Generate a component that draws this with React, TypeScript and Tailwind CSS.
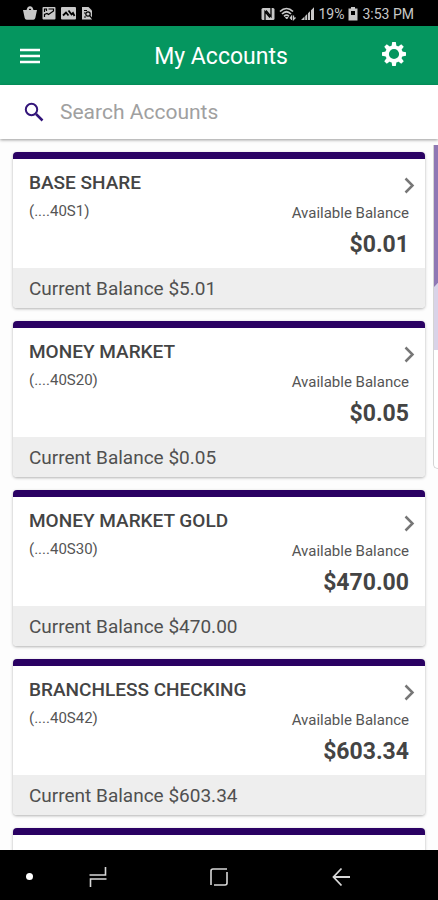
import type { ReactNode } from "react";

type Account = { name: string; number: string; available: string; current: string };

const accounts: Account[] = [
  { name: "BASE SHARE", number: "(....40S1)", available: "$0.01", current: "$5.01" },
  { name: "MONEY MARKET", number: "(....40S20)", available: "$0.05", current: "$0.05" },
  { name: "MONEY MARKET GOLD", number: "(....40S30)", available: "$470.00", current: "$470.00" },
  { name: "BRANCHLESS CHECKING", number: "(....40S42)", available: "$603.34", current: "$603.34" },
];

const gearTeeth = [0, 45, 90, 135, 180, 225, 270, 315];

function StatusBar() {
  return (
    <div className="flex h-[26px] shrink-0 items-center justify-between bg-black pr-6 pl-[23px] text-[#c8c8c8]">
      <div className="flex items-center gap-[5px]">
        <svg width="14" height="14" viewBox="0 0 14 14" fill="currentColor">
          <path d="M0 4h3.500L4.500 1.500Q7-.8 9.500 1.500L10.500 4H14L12.300 12q-.3 1.800-2 1.800H3.700q-1.700 0-2-1.800z" />
          <path d="M5.800 4 6.300 2.800h1.400L8.200 4z" fill="#000" />
        </svg>
        <svg width="14" height="14" viewBox="0 0 14 14">
          <rect x="0.500" y="1" width="13" height="12.500" rx="1" fill="currentColor" />
          <path d="M2.500 11V8.500L5 7.500l1.500 1L11.500 5V3H6.500M2.500 6V3H4.500v2" fill="none" stroke="#000" strokeWidth="1.200" />
        </svg>
        <svg width="15" height="14" viewBox="0 0 15 14">
          <rect x="0" y="1" width="15" height="12.500" rx="1" fill="currentColor" />
          <path d="M2 9.500 5 6.500 7.500 9.500M7.500 4.500l3 4 1.500-1.500 1.500 3" fill="none" stroke="#000" strokeWidth="1.800" />
        </svg>
        <svg width="14" height="14" viewBox="0 0 14 14">
          <path d="M1 1h6.500L11 4.500v9H1z" fill="currentColor" />
          <path d="M3 4.500h3M3 7h1.500M3 11h2" stroke="#000" />
          <circle cx="7" cy="8" r="2.200" fill="none" stroke="#000" strokeWidth="1.200" />
          <path d="m8.500 9.500 3.500 4" stroke="#000" strokeWidth="1.200" />
        </svg>
      </div>
      <div className="flex items-center gap-1 pt-0.5 text-sm">
        <svg width="14" height="14" viewBox="0 0 14 14">
          <path d="M2 1h10q1.500 0 1.500 1.500v9q0 1.500-1.500 1.500H2Q.5 13 .5 11.500v-9Q.5 1 2 1z" fill="currentColor" />
          <path d="M4 14V4.500L9 10.500M10 0V9.500L5 3.500" fill="none" stroke="#000" strokeWidth="1.300" />
        </svg>
        <svg width="18" height="14" viewBox="0 0 18 14" fill="none" stroke="currentColor">
          <path d="M1 4.500c4-4 9-4 13 0M3 7c3-3 6-3 9 0M5 9.300c2-1.700 3-1.700 5 0" strokeWidth="1.700" />
          <path d="M6.500 10.500h2.500L7.700 12z" fill="currentColor" />
          <path d="M11 11.500 12.500 9.500 12.500 13M14.500 8.500v4L16.500 10.500" strokeWidth="1.300" />
        </svg>
        <svg width="13" height="14" viewBox="0 0 13 14" fill="currentColor">
          <path d="M0 13 3.500 9.500V13zM4.200 9l2-2v6h-2zM7 6.200l2-2V13H7zM10 3.200l3-3V13h-3z" />
        </svg>
        <span>19%</span>
        <svg width="10" height="14" viewBox="0 0 10 14">
          <path d="M3 0h4v1.500h2.500V13.500h-9V1.500H3z" fill="currentColor" />
          <path d="M3 4h4v6H3z" fill="#000" />
          <path d="M3 8h4v2H3z" fill="currentColor" />
        </svg>
        <span>3:53 PM</span>
      </div>
    </div>
  );
}

function Header() {
  return (
    <header className="grid h-[59px] shrink-0 grid-cols-[36px_1fr_24px] items-center bg-[#05965f] pr-8 pl-5 text-white">
      <button aria-label="Menu" className="justify-self-start">
        <svg width="20" height="16" viewBox="0 0 20 16" stroke="currentColor" strokeWidth="2.600">
          <path d="M0 2h20M0 8h20M0 14h20" />
        </svg>
      </button>
      <h1 className="pt-1 pl-1 text-center text-[23px]">My Accounts</h1>
      <button aria-label="Settings" className="pb-1">
        <svg width="24" height="24" viewBox="-12 -12 24 24" fill="none" stroke="currentColor">
          <circle r="6.900" strokeWidth="3.600" />
          {gearTeeth.map((angle) => (
            <path key={angle} d="M-2.400-8-1.800-12H1.800L2.400-8z" fill="currentColor" stroke="none" transform={`rotate(${angle})`} />
          ))}
        </svg>
      </button>
    </header>
  );
}

function SearchBar() {
  return (
    <label className="z-10 flex h-[54px] shrink-0 items-center gap-[15px] bg-white pl-6 shadow-[0_1px_3px_rgba(0,0,0,0.4)]">
      <svg width="21" height="21" viewBox="0 0 21 21" fill="none" stroke="#33157a" aria-hidden="true">
        <circle cx="7.500" cy="7.500" r="5.700" strokeWidth="2" />
        <path d="m12 12 6.500 6.500" strokeWidth="2.500" />
      </svg>
      <input
        type="search"
        aria-label="Search Accounts"
        placeholder="Search Accounts"
        className="min-w-0 flex-1 bg-transparent pt-0.5 text-[21px] outline-none placeholder:text-[#a0a0a0]"
      />
    </label>
  );
}

function Card({ children }: { children?: ReactNode }) {
  return (
    <li className="shrink-0 overflow-hidden rounded-[4px] border-t-[7px] border-[#2a0163] bg-white shadow-[0_1px_3px_rgba(0,0,0,0.3)]">
      {children}
    </li>
  );
}

function AccountCard({ account }: { account: Account }) {
  return (
    <Card>
      <a href="#account" className="block">
        <div className="flex h-[109px] justify-between px-4 pt-3 text-[#555]">
          <div>
            <h2 className="text-[19px] leading-6 font-medium text-[#444]">{account.name}</h2>
            <p className="pt-1 text-[15px] leading-6">{account.number}</p>
          </div>
          <div className="flex flex-col items-end pt-1">
            <svg width="11" height="20" viewBox="0 0 11 20" fill="none" stroke="#777" strokeWidth="2.500" className="-mr-1.5">
              <path d="m1.500 3.500 7 7-7 7" />
            </svg>
            <p className="pt-1.5 text-[15px] leading-6">Available Balance</p>
            <p className="pt-1 text-[23px] leading-8 font-bold text-[#444]">{account.available}</p>
          </div>
        </div>
        <p className="bg-[#eee] px-4 pt-[9px] pb-[7px] text-[19px] leading-6 text-[#505050]">Current Balance {account.current}</p>
      </a>
    </Card>
  );
}

function NavBar() {
  return (
    <nav className="grid h-[50px] shrink-0 grid-cols-[58px_79px_1fr_79px_58px] items-center justify-items-center bg-black pt-[3px] text-[#d8d8d8]">
      <button aria-label="Toggle navigation bar" className="size-[7px] rounded-full bg-white" />
      <button aria-label="Recent apps">
        <svg width="18" height="20" viewBox="0 0 18 20" fill="none" stroke="currentColor" strokeWidth="1.600">
          <path d="M.5 8H16.500V0M1.500 20v-8H17.500" />
        </svg>
      </button>
      <button aria-label="Home">
        <svg width="18" height="18" viewBox="0 0 18 18" fill="none" stroke="currentColor" strokeWidth="1.600">
          <path d="M1 17V3q0-2 2-2h14M4 17h11q2 0 2-2V4" />
        </svg>
      </button>
      <button aria-label="Back">
        <svg width="18" height="20" viewBox="0 0 18 20" fill="none" stroke="currentColor" strokeWidth="1.800">
          <path d="M18 10H1.500M9.500 1.500 1.500 10l8 8.500" />
        </svg>
      </button>
    </nav>
  );
}

export default function App() {
  return (
    <div className="flex h-screen flex-col bg-[#fdfdfd] font-[Roboto,sans-serif]">
      <StatusBar />
      <Header />
      <SearchBar />
      <main className="flex min-h-0 flex-1 overflow-hidden">
        <ul className="flex flex-1 flex-col gap-[13px] pt-[13px] pr-2 pl-[13px]">
          {accounts.map((account) => (
            <AccountCard key={account.name} account={account} />
          ))}
          <Card>
            <div className="h-[149px]" />
          </Card>
        </ul>
        <aside className="mt-1.5 h-[324px] w-[5px] shrink-0 overflow-hidden rounded-bl-[6px] border-b border-l border-[#d4d4d4] bg-white">
          <div className="h-[205px] bg-[#d9d3e8]">
            <div className="h-[142px] bg-[#8f78b4] [clip-path:polygon(0_0,100%_0,100%_97%,0_100%)]" />
          </div>
        </aside>
      </main>
      <NavBar />
    </div>
  );
}
